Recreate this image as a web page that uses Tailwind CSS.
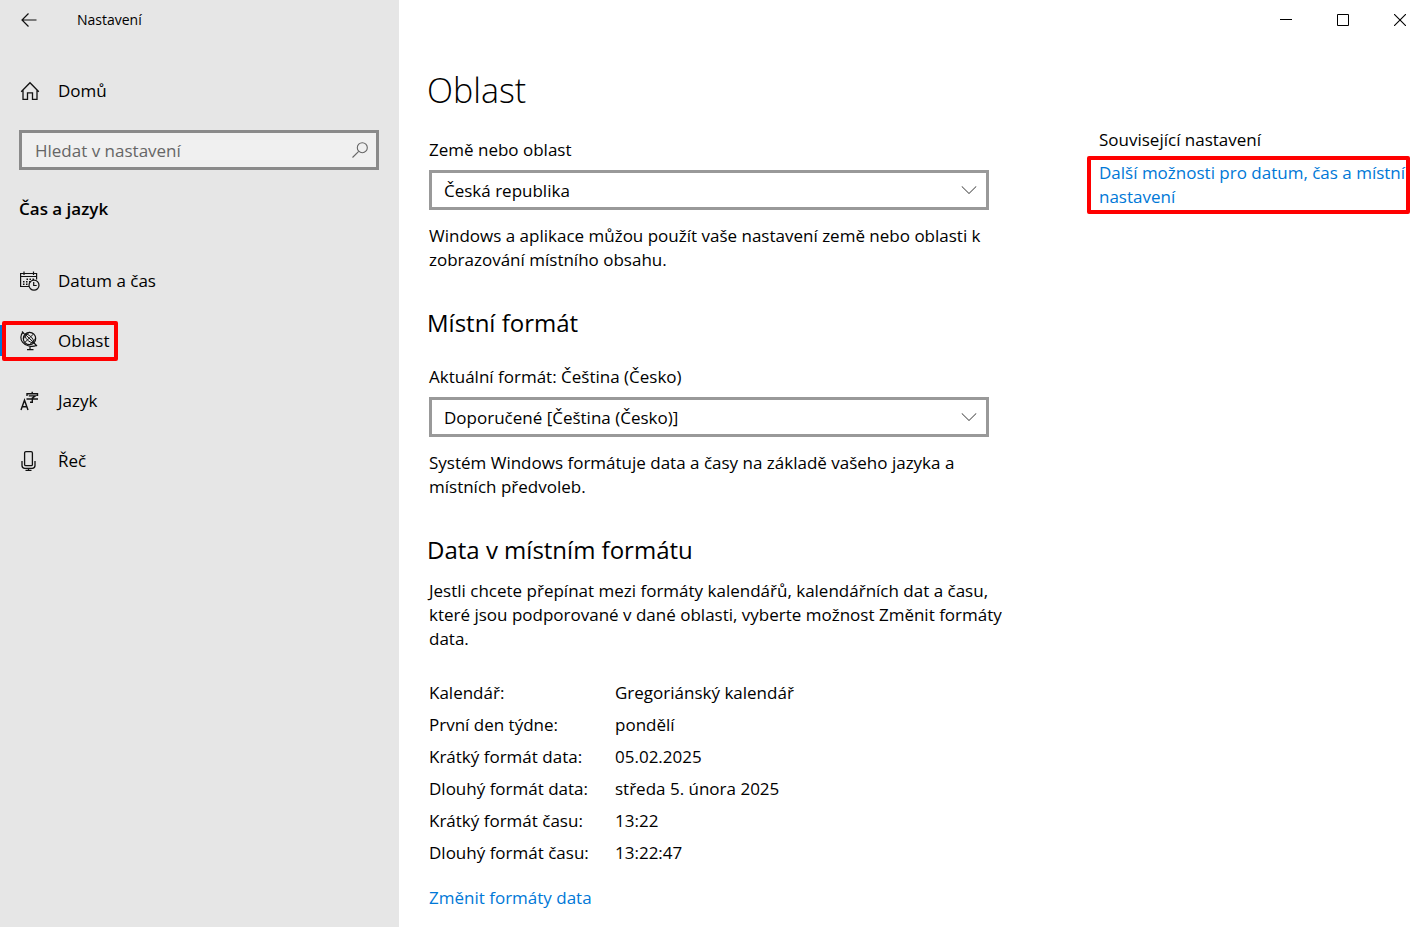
<!DOCTYPE html>
<html lang="cs">
<head>
<meta charset="utf-8">
<meta name="viewport" content="width=device-width, initial-scale=1">
<title>Nastavení</title>
<script src="https://cdn.jsdelivr.net/npm/@tailwindcss/browser@4"></script>
</head>
<body class="flex min-h-screen bg-white font-['Open_Sans','Noto_Sans',sans-serif] text-[17px] leading-6 text-black">

<aside class="w-[399px] shrink-0 bg-[#e6e6e6]">
  <header class="flex h-10 items-center">
    <button type="button" aria-label="Zpět" class="flex h-10 w-[57px] items-center justify-center">
      <svg class="size-4" viewBox="0 0 16 16" fill="none" stroke="#111" stroke-width="1.2"><path d="M15.500 8H1M7.500 1.500 1 8l6.500 6.500"/></svg>
    </button>
    <span class="ml-5 text-sm">Nastavení</span>
  </header>

  <a href="#" class="mt-[31px] flex h-10 items-center gap-[18px] pl-5">
    <svg class="size-5" viewBox="0 0 20 20" fill="none" stroke="#111" stroke-width="1.300"><path d="M1.200 10.800 10 1.800l8.800 9M3 9.200v9.200h4.500v-6.600h5v6.600H17V9.200"/></svg>
    <span>Domů</span>
  </a>

  <form class="mx-[19px] mt-[19px] mr-5 flex h-10 items-center border-3 border-[#8a8a8a] bg-[#f0f0f0] pr-2">
    <input type="search" aria-label="Hledat v nastavení" placeholder="Hledat v nastavení" class="min-w-0 flex-1 bg-transparent pt-0.5 pl-[13px] outline-none placeholder:text-[#666]">
    <button type="submit" aria-label="Hledat">
      <svg class="size-4" viewBox="0 0 16 16" fill="none" stroke="#666" stroke-width="1.100"><circle cx="10.300" cy="5.700" r="5"/><path d="M6.700 9.300.5 15.500"/></svg>
    </button>
  </form>

  <h2 class="mt-[27px] ml-[19px] font-semibold">Čas a jazyk</h2>

  <nav class="mt-10 flex flex-col items-start gap-5">
    <a href="#" class="flex h-10 items-center gap-[18px] pl-5">
      <svg class="size-5" viewBox="0 0 20 20" fill="none" stroke="#111" stroke-width="1.200">
        <path d="M9 15.500H.600V2.500h16v6M.600 5.500h16M4 .5v3.500M13.500.5v3.500"/>
        <path d="M6.500 8.200h8M3 10.800h7.500M3 13.300h6" stroke-width="1.500" stroke-dasharray="1.500 1.500"/>
        <circle cx="14" cy="14.200" r="5"/><path d="M13.700 11v3.500h3"/>
      </svg>
      <span>Datum a čas</span>
    </a>
    <a href="#" aria-current="page" class="relative flex h-10 items-center gap-[18px] pl-5">
      <span class="absolute top-1 left-0 h-[31px] w-1 bg-[#0078d7]"></span>
      <span class="absolute top-0 left-[2px] h-10 w-[116px] rounded-xs border-4 border-[#ff0000]"></span>
      <svg class="size-5" viewBox="0 0 20 20" fill="none" stroke="#111" stroke-width="1.200">
        <circle cx="9.500" cy="7.500" r="6.200"/>
        <path d="M2 .5l2.500 2.700M14 12l3 3M2.700 1.500C.300 4 .300 8.500 2.500 11.200c3 4 9.500 5 14 3.300M10 14.800v3.700M7 18.600h6.500"/>
        <path d="M5 3.200c3.500-.700 8.700 4 9 8.600M5 3.200c-.7 3.500 4 8.800 9 8.600M5 3.200l9 8.600M13.500 3 4.800 11.500M9.500 1.300C6.500 3 4.500 5.500 3.400 8M15.600 7c-1 2.500-3.500 5-6.100 6.500" stroke-width="1"/>
      </svg>
      <span>Oblast</span>
    </a>
    <a href="#" class="flex h-10 items-center gap-[18px] pl-5">
      <svg class="size-5" viewBox="0 0 20 20" fill="none" stroke="#111" stroke-width="1.400">
        <path d="M1 19 4.500 9.200 8 19M2.200 15.700H6.800"/>
        <path d="M12.200.8v1.800M7 5V2.700h10.500V5M8.800 4.900h6.500l-3 2.300v4h-2.300M6.500 8h11.500"/>
      </svg>
      <span>Jazyk</span>
    </a>
    <a href="#" class="flex h-10 items-center gap-[18px] pl-5">
      <svg class="size-5" viewBox="0 0 20 20" fill="none" stroke="#111" stroke-width="1.300">
        <rect x="4.600" y="0.700" width="7.800" height="14" rx="1.300"/>
        <path d="M2 10v4.500c0 1.800 1 2.800 2.800 2.800h7.400c1.800 0 2.800-1 2.800-2.800V10M8.500 17.300v2.200M5.500 19.400h6"/>
      </svg>
      <span>Řeč</span>
    </a>
  </nav>
</aside>

<div class="flex min-w-0 flex-1 flex-col">
  <header class="flex h-10 justify-end">
    <button type="button" aria-label="Minimalizovat" class="flex w-[57px] items-center justify-center">
      <svg class="size-3" viewBox="0 0 12 12" stroke="#000"><path d="M0 5.500h12"/></svg>
    </button>
    <button type="button" aria-label="Maximalizovat" class="flex w-[57px] items-center justify-center">
      <svg class="size-3" viewBox="0 0 12 12" fill="none" stroke="#000"><path d="M.5.5h11v11H.5z"/></svg>
    </button>
    <button type="button" aria-label="Zavřít" class="-mr-[5px] flex w-[57px] items-center justify-center">
      <svg class="size-3" viewBox="0 0 12 12" stroke="#000" stroke-width="1.100"><path d="m0 0 12 12M12 0 0 12"/></svg>
    </button>
  </header>

  <div class="flex items-start pl-[30px]">
    <main class="w-[560px]">
      <h1 class="-ml-0.5 pt-[26px] text-[34px] leading-12 font-light">Oblast</h1>

      <label for="country" class="mt-6 block">Země nebo oblast</label>
      <div class="relative mt-2">
        <select id="country" class="h-10 w-full appearance-none border-3 border-[#999] bg-white pt-0.5 pl-3"><option>Česká republika</option></select>
        <svg class="pointer-events-none absolute top-4 right-3 h-2 w-4" viewBox="0 0 16 8" fill="none" stroke="#333" stroke-width="1"><path d="m.7.300 7.300 7.200L15.300.300"/></svg>
      </div>
      <p class="mt-[14px]">Windows a aplikace můžou použít vaše nastavení země nebo oblasti k zobrazování místního obsahu.</p>

      <h2 class="mt-[35px] -ml-0.5 text-2xl">Místní formát</h2>
      <label for="format" class="mt-[26px] block">Aktuální formát: Čeština (Česko)</label>
      <div class="relative mt-2">
        <select id="format" class="h-10 w-full appearance-none border-3 border-[#999] bg-white pt-0.5 pl-3"><option>Doporučené [Čeština (Česko)]</option></select>
        <svg class="pointer-events-none absolute top-4 right-3 h-2 w-4" viewBox="0 0 16 8" fill="none" stroke="#333" stroke-width="1"><path d="m.7.300 7.300 7.200L15.300.300"/></svg>
      </div>
      <p class="mt-[14px]">Systém Windows formátuje data a časy na základě vašeho jazyka a místních předvoleb.</p>

      <h2 class="mt-[35px] -ml-0.5 text-2xl">Data v místním formátu</h2>
      <p class="mt-[13px] -mr-5">Jestli chcete přepínat mezi formáty kalendářů, kalendářních dat a času, které jsou podporované v dané oblasti, vyberte možnost Změnit formáty data.</p>

      <table class="mt-[26px] w-full text-left">
        <tbody>
          <tr class="h-8"><th scope="row" class="w-[186px] p-0 font-normal">Kalendář:</th><td class="p-0">Gregoriánský kalendář</td></tr>
          <tr class="h-8"><th scope="row" class="p-0 font-normal">První den týdne:</th><td class="p-0">pondělí</td></tr>
          <tr class="h-8"><th scope="row" class="p-0 font-normal">Krátký formát data:</th><td class="p-0">05.02.2025</td></tr>
          <tr class="h-8"><th scope="row" class="p-0 font-normal">Dlouhý formát data:</th><td class="p-0">středa 5. února 2025</td></tr>
          <tr class="h-8"><th scope="row" class="p-0 font-normal">Krátký formát času:</th><td class="p-0">13:22</td></tr>
          <tr class="h-8"><th scope="row" class="p-0 font-normal">Dlouhý formát času:</th><td class="p-0">13:22:47</td></tr>
        </tbody>
      </table>
      <a href="#" class="mt-[17px] inline-block text-[#0078d7]">Změnit formáty data</a>
    </main>

    <section class="mt-[88px] ml-[98px] min-w-0 flex-1 pr-[13px]">
      <h2 class="pl-3">Související nastavení</h2>
      <div class="mt-1 rounded-xs border-4 border-[#ff0000] py-[1px] pl-2">
        <a href="#" class="block text-[#0078d7]">Další možnosti pro datum, čas a místní nastavení</a>
      </div>
    </section>
  </div>
</div>
</body>
</html>
